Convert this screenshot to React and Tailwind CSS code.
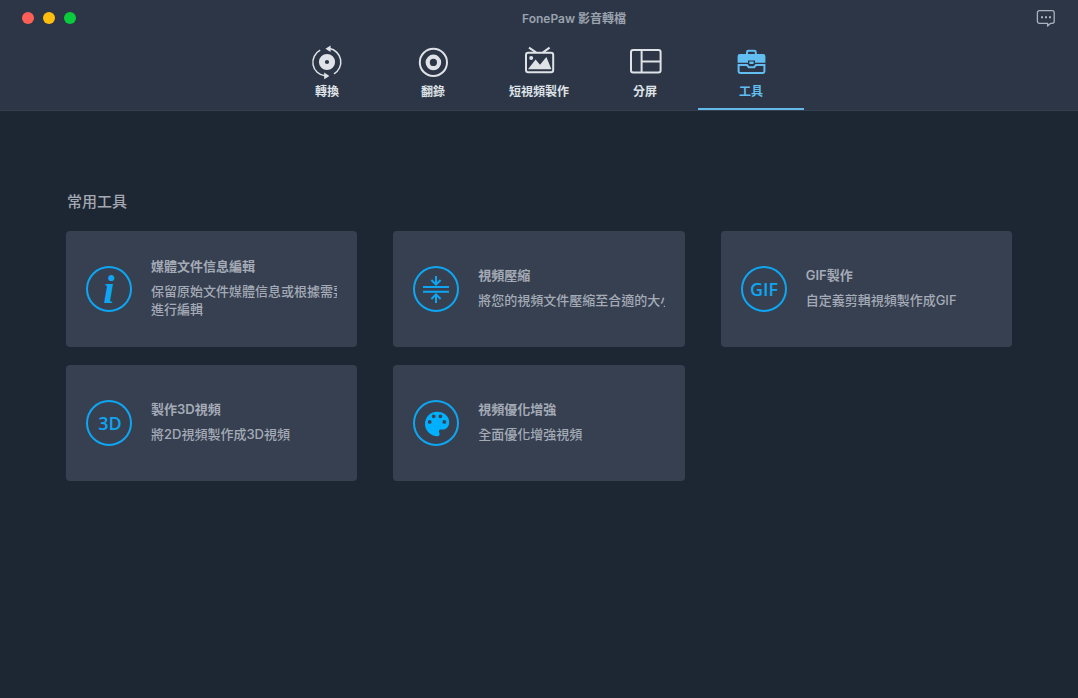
function ConvertIcon() {
  return (
    <svg width="32" height="32" viewBox="0 0 32 32" className="overflow-visible" fill="none" aria-hidden="true">
      <circle cx="16" cy="16" r="5.1" stroke="currentColor" strokeWidth="6" />
      <path d="M9.2 4.2A13.6 13.6 0 0 0 14 29.8" stroke="currentColor" strokeWidth="1.5" />
      <path d="M18.5 2.6A13.6 13.6 0 0 1 23 27.8" stroke="currentColor" strokeWidth="1.5" />
      <path d="M14.4 2.700 19.6-.6v6.600zM18.400 29.900l-5.200-3.300v6.600z" fill="currentColor" />
    </svg>
  );
}

function RipIcon() {
  return (
    <svg width="32" height="32" viewBox="0 0 32 32" fill="none" aria-hidden="true">
      <circle cx="16.4" cy="16.4" r="13.6" stroke="currentColor" strokeWidth="2" />
      <circle cx="16.4" cy="16.4" r="5.7" stroke="currentColor" strokeWidth="4.2" />
    </svg>
  );
}

function VideoIcon() {
  return (
    <svg width="32" height="32" viewBox="0 0 32 32" fill="none" aria-hidden="true">
      <rect x="3" y="6.8" width="27.2" height="19.4" rx="2.2" stroke="currentColor" strokeWidth="2" />
      <path d="M6 1.6 13 6.4M26.6 1.6 20 6.4" stroke="currentColor" strokeWidth="2" />
      <circle cx="8.2" cy="12.1" r="2" fill="currentColor" />
      <path d="M5 23.2 12.6 13.4l4.4 5.4 6.4-7.8 5 12.2z" fill="currentColor" />
    </svg>
  );
}

function SplitIcon() {
  return (
    <svg width="34" height="32" viewBox="0 0 34 32" fill="none" stroke="currentColor" strokeWidth="2" aria-hidden="true">
      <rect x="3" y="4" width="29.6" height="22.4" rx="2.2" />
      <path d="M13.6 4v22.4M13.6 15.6h19" />
    </svg>
  );
}

function ToolboxIcon() {
  return (
    <svg width="32" height="32" viewBox="0 0 32 32" fill="none" aria-hidden="true">
      <path d="M12 9V6.2Q12 4.8 13.4 4.8h6Q20.8 4.8 20.8 6.2V9" stroke="currentColor" strokeWidth="2" />
      <path d="M4.8 8h23.4a2.2 2.2 0 0 1 2.2 2.2v6.6H20v-2.4h-7v2.4H2.6v-6.6A2.2 2.2 0 0 1 4.8 8z" fill="currentColor" />
      <rect x="14.2" y="15.6" width="4.6" height="2.4" rx="1" fill="currentColor" />
      <path d="M3.6 19h8.4l1.8 2.200h5.400L21 19h8.400v6.600q0 1.400-1.400 1.400H5q-1.400 0-1.400-1.400z" stroke="currentColor" strokeWidth="2" />
    </svg>
  );
}

function FeedbackIcon() {
  return (
    <svg width="20" height="18" viewBox="0 0 20 18" fill="none" aria-hidden="true">
      <path d="M3.4 1.7h12.8a2 2 0 0 1 2 2v8.6a2 2 0 0 1-2 2h-1.6L11.6 17v-2.7H3.4a2 2 0 0 1-2-2V3.7a2 2 0 0 1 2-2z" stroke="currentColor" strokeWidth="1.3" strokeLinejoin="round" />
      <path d="M5 7.2h2v2H5zM9 7.2h2v2H9zM13 7.2h2v2h-2z" fill="currentColor" />
    </svg>
  );
}

function Ring({ children }) {
  return (
    <svg width="46" height="46" viewBox="0 0 46 46" className="shrink-0 text-[#0ea6f2]" fill="none" aria-hidden="true">
      <circle cx="23" cy="23" r="22" stroke="currentColor" strokeWidth="2" />
      {children}
    </svg>
  );
}

const infoIcon = (
  <Ring>
    <text x="23" y="37" textAnchor="middle" fill="currentColor" className="font-['Liberation_Serif',serif] text-[41px] font-bold italic">i</text>
  </Ring>
);

const compressIcon = (
  <Ring>
    <path d="M10 20.9h26M10 25.8h26M23 10v8.400M18.4 14l4.600 4.600L27.600 14M23 37v-8.400M18.400 33l4.600-4.600 4.600 4.600" stroke="currentColor" strokeWidth="2" />
  </Ring>
);

const gifIcon = (
  <Ring>
    <text x="23" y="30" textAnchor="middle" fill="currentColor" className="font-['Open_Sans',sans-serif] text-[18px] font-semibold">GIF</text>
  </Ring>
);

const threeDIcon = (
  <Ring>
    <text x="24" y="30" textAnchor="middle" fill="currentColor" className="font-['Open_Sans',sans-serif] text-[18px] font-semibold">3D</text>
  </Ring>
);

const paletteIcon = (
  <Ring>
    <path
      fillRule="evenodd"
      fill="#00b0ff"
      d="M24 11.8c7 0 12.2 4.400 12.2 10.200 0 4.600-2.800 7.600-6.400 7.600h-2c-1.600 0-2.100 1-1.700 2.300.4 1.200.5 1.700.5 2.400 0 1.200-.8 1.900-2 1.900C17.500 36.200 12 30.600 12 24c0-6.800 5.200-12.200 12-12.200zM16.700 20a1.900 1.900 0 1 0 0 3.800 1.900 1.900 0 0 0 0-3.800zM20.700 14.400a1.900 1.900 0 1 0 0 3.800 1.900 1.900 0 0 0 0-3.800zM27.400 14.400a1.900 1.900 0 1 0 0 3.800 1.900 1.900 0 0 0 0-3.800zM31.300 20a1.900 1.900 0 1 0 0 3.800 1.900 1.900 0 0 0 0-3.800z"
    />
  </Ring>
);

const tabs = [
  { label: "轉換", Icon: ConvertIcon },
  { label: "翻錄", Icon: RipIcon },
  { label: "短視頻製作", Icon: VideoIcon },
  { label: "分屏", Icon: SplitIcon },
  { label: "工具", Icon: ToolboxIcon, active: true },
];

const tools = [
  { title: "媒體文件信息編輯", lines: ["保留原始文件媒體信息或根據需要", "進行編輯"], icon: infoIcon },
  { title: "視頻壓縮", lines: ["將您的視頻文件壓縮至合適的大小"], icon: compressIcon },
  { title: "GIF製作", lines: ["自定義剪輯視頻製作成GIF"], icon: gifIcon },
  { title: "製作3D視頻", lines: ["將2D視頻製作成3D視頻"], icon: threeDIcon },
  { title: "視頻優化增強", lines: ["全面優化增強視頻"], icon: paletteIcon },
];

function ToolCard({ title, lines, icon }) {
  return (
    <button type="button" className="flex min-h-[116px] items-center gap-[19px] rounded-[4px] bg-[#364051] px-5 text-left">
      {icon}
      <span className="flex min-w-0 flex-1 flex-col gap-[7px] pb-[3px] text-[13px] leading-[18px] text-[#a5abb6]">
        <span className="font-semibold">{title}</span>
        <span className="overflow-hidden font-medium whitespace-nowrap">
          {lines.map((line) => (
            <span key={line} className="block">{line}</span>
          ))}
        </span>
      </span>
    </button>
  );
}

export default function App() {
  return (
    <div className="flex min-h-screen flex-col bg-[#1d2633] font-[Inter,'Noto_Sans_CJK_TC',sans-serif]">
      <header className="border-b border-[#36404f] bg-[#2c3646]">
        <div className="grid h-9 grid-cols-[1fr_auto_1fr] items-center px-[22px]">
          <div className="flex gap-[9px]">
            <button type="button" aria-label="關閉" className="size-3 rounded-full bg-[#ff5f57]" />
            <button type="button" aria-label="最小化" className="size-3 rounded-full bg-[#ffbd0e]" />
            <button type="button" aria-label="縮放" className="size-3 rounded-full bg-[#0acb3c]" />
          </div>
          <h1 className="pt-[2px] pl-[70px] text-xs font-semibold text-[#9ba2ae]">FonePaw 影音轉檔</h1>
          <button type="button" aria-label="意見回饋" className="justify-self-end text-[#a9b2bf]">
            <FeedbackIcon />
          </button>
        </div>
        <nav className="flex justify-center">
          {tabs.map(({ label, Icon, active }) => (
            <button
              key={label}
              type="button"
              aria-current={active ? "page" : undefined}
              className={
                active
                  ? "flex w-[106px] flex-col items-center gap-[5px] border-b-2 border-[#62b9ea] pt-[10px] pb-[7px] text-[#62bdf0]"
                  : "flex w-[106px] flex-col items-center gap-[5px] border-b-2 border-transparent pt-[10px] pb-[7px] text-[#dfe2e6]"
              }
            >
              <Icon />
              <span className="text-xs leading-[18px] font-bold">{label}</span>
            </button>
          ))}
        </nav>
      </header>
      <main className="px-[66px] pt-[79px] pb-10">
        <h2 className="mb-[17px] pl-px text-[15px] leading-6 font-medium text-[#a3a8b1]">常用工具</h2>
        <div className="grid grid-cols-3 gap-x-9 gap-y-[18px]">
          {tools.map((tool) => (
            <ToolCard key={tool.title} {...tool} />
          ))}
        </div>
      </main>
    </div>
  );
}
